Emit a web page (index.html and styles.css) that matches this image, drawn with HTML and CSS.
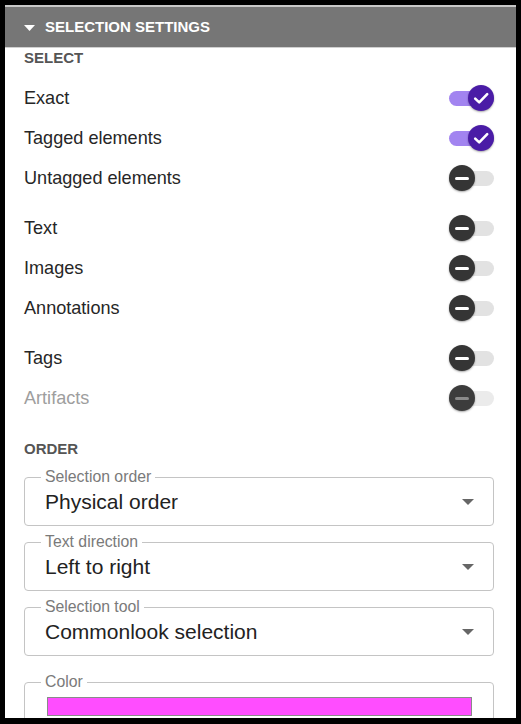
FILE: index.html
```html
<!DOCTYPE html>
<html lang="en">
<head>
<meta charset="utf-8">
<title>Selection settings</title>
<link rel="stylesheet" href="styles.css">
</head>
<body>
<div class="panel">
  <div class="header">
    <svg class="caret-down" width="11" height="6" viewBox="0 0 11 6"><polygon points="0,0 11,0 5.5,6" fill="#ffffff"/></svg>
    <span class="header-title">SELECTION SETTINGS</span>
  </div>
  <div class="content">
    <div class="section-label">SELECT</div>
    <div class="group">
      <div class="row"><span class="row-label">Exact</span><span class="toggle on"><span class="thumb"><svg width="26" height="26" viewBox="0 0 26 26"><path d="M7.2 13.6 L11.2 17.4 L19.2 9.2" fill="none" stroke="#fff" stroke-width="2.6" stroke-linecap="round" stroke-linejoin="round"/></svg></span></span></div>
      <div class="row"><span class="row-label">Tagged elements</span><span class="toggle on"><span class="thumb"><svg width="26" height="26" viewBox="0 0 26 26"><path d="M7.2 13.6 L11.2 17.4 L19.2 9.2" fill="none" stroke="#fff" stroke-width="2.6" stroke-linecap="round" stroke-linejoin="round"/></svg></span></span></div>
      <div class="row"><span class="row-label">Untagged elements</span><span class="toggle off"><span class="thumb"><span class="minus"></span></span></span></div>
    </div>
    <div class="group">
      <div class="row"><span class="row-label">Text</span><span class="toggle off"><span class="thumb"><span class="minus"></span></span></span></div>
      <div class="row"><span class="row-label">Images</span><span class="toggle off"><span class="thumb"><span class="minus"></span></span></span></div>
      <div class="row"><span class="row-label">Annotations</span><span class="toggle off"><span class="thumb"><span class="minus"></span></span></span></div>
    </div>
    <div class="group">
      <div class="row"><span class="row-label">Tags</span><span class="toggle off"><span class="thumb"><span class="minus"></span></span></span></div>
      <div class="row disabled"><span class="row-label">Artifacts</span><span class="toggle off"><span class="thumb"><span class="minus"></span></span></span></div>
    </div>
    <div class="section-label order-label">ORDER</div>
    <fieldset class="field">
      <legend>Selection order</legend>
      <div class="field-value"><span>Physical order</span><svg class="dd" width="12" height="6" viewBox="0 0 12 6"><polygon points="0,0 12,0 6,6" fill="#666"/></svg></div>
    </fieldset>
    <fieldset class="field">
      <legend>Text direction</legend>
      <div class="field-value"><span>Left to right</span><svg class="dd" width="12" height="6" viewBox="0 0 12 6"><polygon points="0,0 12,0 6,6" fill="#666"/></svg></div>
    </fieldset>
    <fieldset class="field">
      <legend>Selection tool</legend>
      <div class="field-value"><span>Commonlook selection</span><svg class="dd" width="12" height="6" viewBox="0 0 12 6"><polygon points="0,0 12,0 6,6" fill="#666"/></svg></div>
    </fieldset>
    <fieldset class="field color-field">
      <legend>Color</legend>
      <div class="swatch-wrap"><div class="swatch"></div></div>
    </fieldset>
  </div>
</div>
</body>
</html>
```
FILE: styles.css
```css
html, body {
  margin: 0;
  padding: 0;
  background: #000;
}
body {
  font-family: "Liberation Sans", Arial, sans-serif;
}
.panel {
  margin: 5px 0 0 5px;
  width: 511px;
  height: 713px;
  overflow: hidden;
  background: #fff;
}
.header {
  height: 40px;
  background: #767676;
  border-top: 2px solid #c8c8c8;
  border-bottom: 1px solid #d0d0d0;
  display: flex;
  align-items: center;
  padding-left: 19px;
  gap: 10px;
}
.caret-down {
  display: block;
  margin-top: 1px;
}
.header-title {
  color: #fff;
  font-weight: bold;
  font-size: 15px;
  line-height: 20px;
}
.content {
  padding: 0 22px 0 19px;
}
.section-label {
  font-size: 15px;
  font-weight: bold;
  color: #555;
  line-height: 20px;
  height: 20px;
}
.group {
  margin-top: 10px;
}
.row {
  height: 40px;
  display: flex;
  align-items: center;
  justify-content: space-between;
}
.row-label {
  font-size: 18.1px;
  color: #262626;
}
.row.disabled .row-label {
  color: #9e9e9e;
}
.toggle {
  position: relative;
  width: 45px;
  height: 26px;
  display: flex;
  align-items: center;
}
.toggle::before {
  content: "";
  position: absolute;
  left: 0;
  right: 0;
  top: 5.5px;
  height: 15px;
  border-radius: 8px;
  background: #e2e2e2;
}
.toggle.on {
  justify-content: flex-end;
}
.toggle.on::before {
  background: #a284f0;
}
.thumb {
  position: relative;
  width: 26px;
  height: 26px;
  border-radius: 50%;
  background: #353535;
  box-shadow: 0 1px 2px rgba(0,0,0,0.35);
  display: flex;
  align-items: center;
  justify-content: center;
}
.toggle.on .thumb {
  background: #4a1ca6;
}
.thumb svg {
  display: block;
}
.minus {
  width: 14px;
  height: 3px;
  border-radius: 1.5px;
  background: #fff;
}
.row.disabled .thumb {
  background: #3c3c3c;
}
.row.disabled .minus {
  background: #8a8a8a;
}
.row.disabled .toggle::before {
  background: #ebebeb;
}
.order-label {
  margin-top: 21px;
}
.field {
  margin: 7px 0 0 0;
  padding: 0 16px 7px 16px;
  border: 1px solid #c4c4c4;
  border-radius: 4px;
  min-width: 0;
}
.order-label + .field {
  margin-top: 9px;
}
.field legend {
  padding: 0 4px;
  font-size: 15.8px;
  line-height: 18px;
  color: #7a7a7a;
}
.field-value {
  height: 32px;
  display: flex;
  align-items: center;
  justify-content: space-between;
  padding-left: 4px;
  font-size: 21px;
  color: #222;
}
.dd {
  display: block;
  margin-right: 3px;
}
.color-field {
  margin-top: 17px;
}
.swatch-wrap {
  padding: 6px 5px 0 6px;
}
.swatch {
  height: 17px;
  border: 1px solid #8a8a8a;
  background: #ff4dff;
}
```
